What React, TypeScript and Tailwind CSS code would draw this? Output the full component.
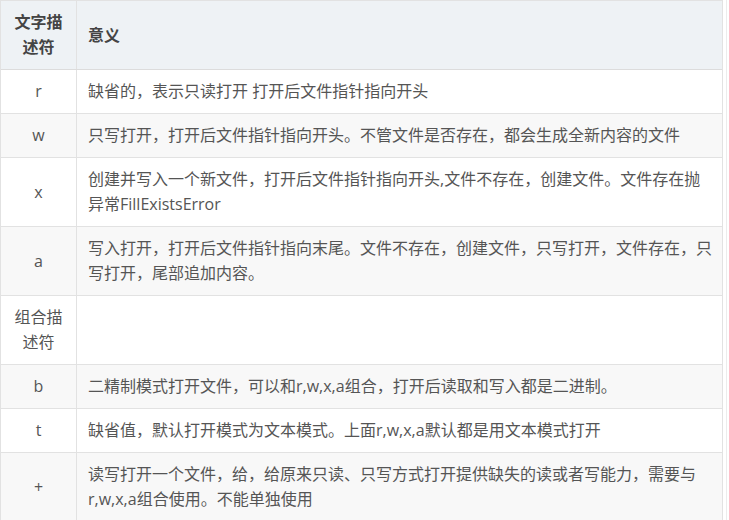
import React from "react";

type Row = { key: string; desc: string };

const ROWS: Row[] = [
  { key: "r", desc: "缺省的，表示只读打开 打开后文件指针指向开头" },
  { key: "w", desc: "只写打开，打开后文件指针指向开头。不管文件是否存在，都会生成全新内容的文件" },
  { key: "x", desc: "创建并写入一个新文件，打开后文件指针指向开头,文件不存在，创建文件。文件存在抛异常FillExistsError" },
  { key: "a", desc: "写入打开，打开后文件指针指向末尾。文件不存在，创建文件，只写打开，文件存在，只写打开，尾部追加内容。" },
  { key: "组合描述符", desc: "" },
  { key: "b", desc: "二精制模式打开文件，可以和r,w,x,a组合，打开后读取和写入都是二进制。" },
  { key: "t", desc: "缺省值，默认打开模式为文本模式。上面r,w,x,a默认都是用文本模式打开" },
  { key: "+", desc: "读写打开一个文件，给，给原来只读、只写方式打开提供缺失的读或者写能力，需要与r,w,x,a组合使用。不能单独使用" },
];

export default function App() {
  return (
    <div
      className="w-[729px] h-[520px] overflow-hidden bg-white flex text-[16px] leading-[25px] text-[#555]"
      style={{ fontFamily: '"Open Sans", "Noto Sans CJK SC", sans-serif' }}
    >
      <div className="w-[723px] border-l border-t border-r border-[#e2e2e2] shrink-0 self-start">
        {/* header */}
        <div className="flex bg-[#eef2f5] border-b border-[#dcdcdc]">
          <div className="w-[76px] shrink-0 border-r border-[#e2e2e2] py-[9px] px-[10px] text-center font-bold text-[#444]">
            文字描述符
          </div>
          <div className="flex-1 flex items-center pl-[11px] pr-[9px] font-bold text-[#444]">意义</div>
        </div>
        {ROWS.map((r, i) => (
          <div
            key={r.key}
            className={`flex border-b border-[#e2e2e2] ${i % 2 === 1 ? "bg-[#f8f8f8]" : "bg-white"}`}
          >
            <div className="w-[76px] shrink-0 border-r border-[#e2e2e2] py-[9px] px-[10px] flex items-center justify-center text-center">
              {r.key}
            </div>
            <div className="flex-1 min-w-0 py-[9px] pl-[11px] pr-[9px] flex items-center">
              <span>{r.desc}</span>
            </div>
          </div>
        ))}
      </div>
      <div className="w-px h-full bg-[#ececec] ml-[3px]" />
    </div>
  );
}
